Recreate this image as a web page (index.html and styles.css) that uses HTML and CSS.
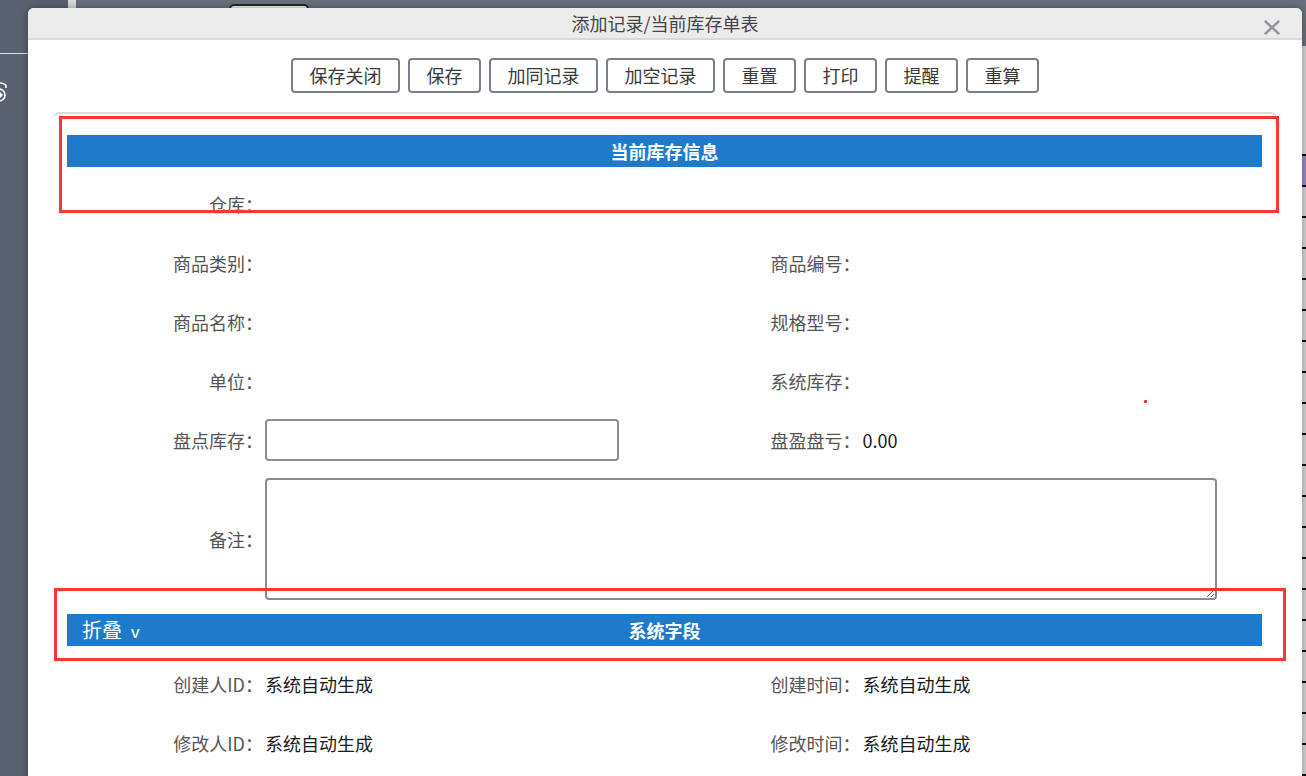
FILE: index.html
```html
<!DOCTYPE html>
<html lang="zh-CN">
<head>
<meta charset="utf-8">
<title>添加记录/当前库存单表</title>
<link rel="stylesheet" href="styles.css">
</head>
<body>
<div class="page">
  <aside class="sidebar">
    <div class="sidebar-head"></div>
    <svg class="sidebar-icon" width="20" height="24" viewBox="0 0 20 24" fill="none" stroke="#fff" stroke-width="1.6">
      <path d="M3 7 a7 3 0 0 1 14 0"/>
      <path d="M3 7 v2 M17 7 v2"/>
      <circle cx="10" cy="16" r="6"/>
      <path d="M6.5 16 h6.5 M10.5 13.5 l2.5 2.5 -2.5 2.5"/>
    </svg>
  </aside>
  <div class="splitter"></div>
  <div class="main">
    <div class="topbar"><div class="tab"></div></div>
    <div class="content">
      <div class="trow head"></div>
      <div class="trow"></div><div class="trow"></div><div class="trow"></div><div class="trow"></div>
      <div class="trow"></div><div class="trow"></div><div class="trow"></div><div class="trow"></div>
      <div class="trow"></div><div class="trow"></div><div class="trow"></div><div class="trow"></div>
      <div class="trow"></div><div class="trow"></div><div class="trow"></div><div class="trow"></div>
      <div class="trow"></div><div class="trow"></div><div class="trow"></div>
    </div>
  </div>
</div>

<div class="modal">
  <div class="modal-title">
    添加记录/当前库存单表
    <svg class="close" width="16" height="15" viewBox="0 0 16 15" stroke="#92969c" stroke-width="2.4" stroke-linecap="round">
      <path d="M1.5 1.5 L14.5 13.5 M14.5 1.5 L1.5 13.5"/>
    </svg>
  </div>
  <div class="modal-body">
    <div class="toolbar">
      <button class="btn">保存关闭</button>
      <button class="btn">保存</button>
      <button class="btn">加同记录</button>
      <button class="btn">加空记录</button>
      <button class="btn">重置</button>
      <button class="btn">打印</button>
      <button class="btn">提醒</button>
      <button class="btn">重算</button>
    </div>
    <div class="panel">
      <section class="section">
        <div class="section-head"><span class="head-title">当前库存信息</span></div>
        <div class="form">
          <div class="label">仓库：</div><div class="value"></div><div class="label"></div><div class="value"></div>
          <div class="label">商品类别：</div><div class="value"></div><div class="label">商品编号：</div><div class="value"></div>
          <div class="label">商品名称：</div><div class="value"></div><div class="label">规格型号：</div><div class="value"></div>
          <div class="label">单位：</div><div class="value"></div><div class="label">系统库存：</div><div class="value"></div>
          <div class="label">盘点库存：</div><div class="value"><input class="input" type="text"></div><div class="label">盘盈盘亏：</div><div class="value">0.00</div>
          <div class="label">备注：</div><div class="value span3"><textarea class="textarea"></textarea></div>
        </div>
      </section>
      <section class="section section-sys">
        <div class="section-head"><span class="toggle">折叠<span class="chev">v</span></span><span class="head-title">系统字段</span></div>
        <div class="form form-sys">
          <div class="label">创建人ID：</div><div class="value">系统自动生成</div><div class="label">创建时间：</div><div class="value">系统自动生成</div>
          <div class="label">修改人ID：</div><div class="value">系统自动生成</div><div class="label">修改时间：</div><div class="value">系统自动生成</div>
        </div>
      </section>
    </div>
  </div>
</div>

<div class="mark mark-1"></div>
<div class="mark mark-2"></div>
<div class="dot"></div>
</body>
</html>
```

FILE: styles.css
```css
* { box-sizing: border-box; }

html, body {
  margin: 0;
  width: 1306px;
  height: 776px;
  overflow: hidden;
}

body {
  position: relative;
  font-family: "Noto Sans CJK SC", "Liberation Sans", sans-serif;
  background: #5a6171;
}

/* background page */
.page {
  display: flex;
  height: 776px;
}

.sidebar {
  width: 68px;
  flex-shrink: 0;
  background: #5a6171;
  overflow: hidden;
}

.sidebar-head {
  height: 54px;
  border-bottom: 1px solid #dedfe2;
}

.sidebar-icon {
  display: block;
  margin: 25px 0 0 -11px;
}

.splitter {
  width: 8px;
  flex-shrink: 0;
  background: #dcdcdc;
}

.main {
  flex: 1;
  display: flex;
  flex-direction: column;
}

.topbar {
  height: 53px;
  background: #6b717e;
  padding: 4px 0 0 153px;
}

.tab {
  width: 80px;
  height: 30px;
  border: 2px solid #2a2a2a;
  border-radius: 5px;
  background: #efefef;
}

.content {
  flex: 1;
  background: #d4d4d4;
  padding-top: 108px;
}

.trow {
  height: 31px;
  border-bottom: 2px solid #111;
}

.trow.head {
  border-top: 2px solid #111;
  height: 33px;
  background: #9a88cc;
}

/* modal */
.modal {
  position: absolute;
  left: 28px;
  top: 8px;
  width: 1274px;
  height: 790px;
  background: #fff;
  border-radius: 6px 6px 0 0;
  box-shadow: 0 0 10px rgba(0, 0, 0, 0.35);
  overflow: hidden;
}

.modal-title {
  position: relative;
  height: 32px;
  background: #ebebeb;
  border-bottom: 2px solid #d9d9d9;
  text-align: center;
  font-size: 18px;
  line-height: 30px;
  color: #444;
}

.close {
  position: absolute;
  right: 22px;
  top: 12px;
}

.modal-body {
  padding: 18px 24px 0;
}

.toolbar {
  display: flex;
  justify-content: center;
  gap: 8px;
}

.btn {
  height: 35px;
  padding: 0 16.5px;
  border: 2px solid #7a808b;
  border-radius: 4px;
  background: #fff;
  font-family: "Noto Sans CJK SC", "Liberation Sans", sans-serif;
  font-size: 18px;
  line-height: 31px;
  color: #3a3a3a;
}

.panel {
  margin-top: 19px;
  border-top: 2px solid #dcdcdc;
  border-radius: 8px;
  padding: 21px 16px 0 15px;
}

.section-head {
  height: 32px;
  background: #1e7bcb;
  color: #fff;
  display: grid;
  grid-template-columns: 1fr auto 1fr;
  align-items: center;
  font-size: 18px;
  line-height: 1;
}

.head-title {
  grid-column: 2;
  font-weight: 700;
}

.toggle {
  grid-column: 1;
  justify-self: start;
  padding-left: 15px;
  font-size: 20px;
  font-weight: 400;
}

.chev {
  font-family: "Liberation Sans", sans-serif;
  font-size: 17px;
  margin-left: 9px;
}

.form {
  display: grid;
  grid-template-columns: 198px 1fr 198px 1fr;
  row-gap: 17px;
  margin-top: 16px;
  align-items: center;
}

.form > div {
  min-height: 42px;
  display: flex;
  align-items: center;
  font-size: 18px;
  line-height: 1;
}

.label {
  justify-content: flex-end;
  padding-right: 2px;
  color: #555;
}

.value {
  color: #1a1a1a;
}

.span3 {
  grid-column: 2 / span 3;
}

.input {
  width: 354px;
  height: 42px;
  border: 2px solid #8c8c8c;
  border-radius: 4px;
  background: #fff;
}

.textarea {
  display: block;
  width: 952px;
  height: 122px;
  border: 2px solid #8c8c8c;
  border-radius: 4px;
  background: #fff;
}

.section-sys {
  margin-top: 14px;
}

.form-sys {
  margin-top: 17px;
}

/* red annotation marks */
.mark {
  position: absolute;
  border: 3px solid #ff3636;
}

.mark-1 {
  left: 59px;
  top: 116px;
  width: 1220px;
  height: 97px;
}

.mark-2 {
  left: 54px;
  top: 588px;
  width: 1232px;
  height: 73px;
}

.dot {
  position: absolute;
  left: 1144px;
  top: 400px;
  width: 3px;
  height: 3px;
  background: #ff3636;
}
```
